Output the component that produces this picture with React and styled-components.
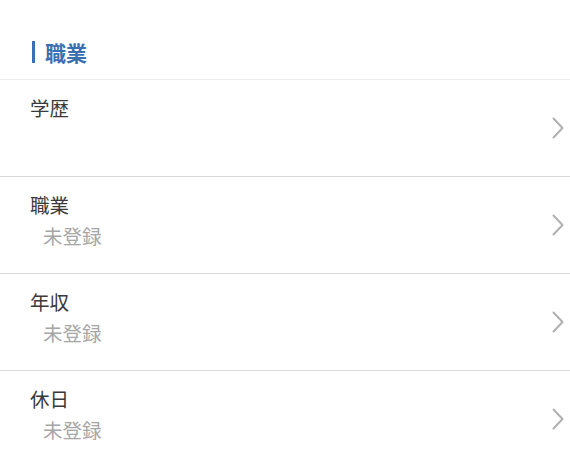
import React from "react";
import styled, { createGlobalStyle } from "styled-components";

const Global = createGlobalStyle`
  html, body { margin: 0; padding: 0; background: #fff; }
  body { font-family: "Noto Sans CJK JP", "Noto Sans", sans-serif; }
`;

const Page = styled.div`
  width: 570px;
  background: #fff;
`;

const Header = styled.div`
  height: 80px;
  display: flex;
  align-items: center;
  padding: 25px 0 0 32px;
  box-sizing: border-box;
  border-bottom: 1px solid #ececec;
`;

const Bar = styled.span`
  width: 3px;
  height: 22px;
  background: #3a70b2;
  margin-right: 10px;
`;

const Title = styled.h2`
  margin: 0;
  font-size: 21px;
  font-weight: 700;
  color: #3a70b2;
  line-height: 1;
`;

const Row = styled.div`
  height: 96px;
  display: flex;
  align-items: center;
  border-bottom: 1px solid #d9d9d9;
  padding: 0 6px 0 30px;
  &:last-child {
    border-bottom: none;
  }
`;

const Texts = styled.div`
  flex: 1;
  align-self: flex-start;
  padding-top: 12px;
  display: flex;
  flex-direction: column;
`;

const Label = styled.div`
  font-size: 19.5px;
  line-height: 31px;
  color: #3a3a3a;
`;

const Value = styled.div`
  font-size: 19.5px;
  line-height: 31px;
  color: #a6a6a6;
  padding-left: 13px;
`;

const Chevron = () => (
  <svg width="12" height="22" viewBox="0 0 12 22" fill="none">
    <path d="M1.5 1.5 L10.5 11 L1.5 20.5" stroke="#b0b0b0" strokeWidth="2" strokeLinecap="round" strokeLinejoin="round" />
  </svg>
);

const items = [
  { label: "学歴", value: null },
  { label: "職業", value: "未登録" },
  { label: "年収", value: "未登録" },
  { label: "休日", value: "未登録" },
];

export default function App() {
  return (
    <Page>
      <Global />
      <Header>
        <Bar />
        <Title>職業</Title>
      </Header>
      {items.map((it) => (
        <Row key={it.label}>
          <Texts>
            <Label>{it.label}</Label>
            {it.value && <Value>{it.value}</Value>}
          </Texts>
          <Chevron />
        </Row>
      ))}
    </Page>
  );
}
